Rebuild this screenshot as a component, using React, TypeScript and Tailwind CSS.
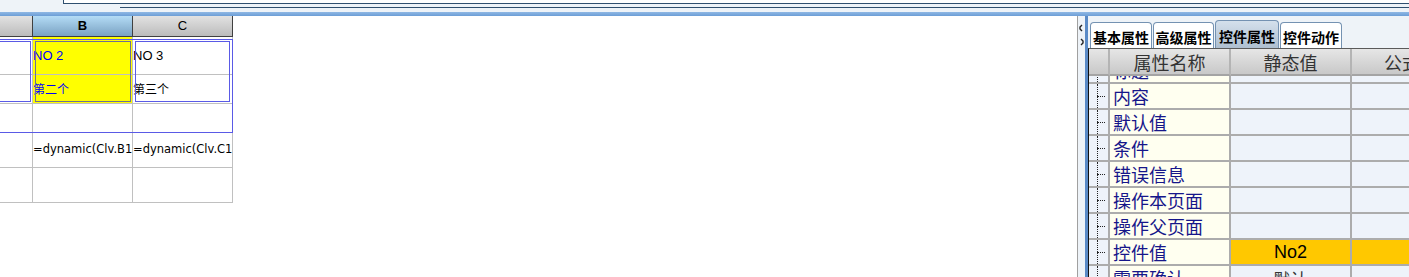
import React from 'react'

const CJK = "font-['Noto_Sans_CJK_SC','Noto_Sans',sans-serif]"

const PROPS = ['标题', '内容', '默认值', '条件', '错误信息', '操作本页面', '操作父页面', '控件值', '需要确认']

function TopBar() {
  return (
    <div className="h-[16px] flex flex-col">
      <div className="h-[12px] flex flex-col">
        <div className="ml-[63px] h-[4px] bg-white border-l border-b border-[#2f4f6f]" />
        <div className="ml-[120px] mt-[3px] h-px bg-[#2f4f6f]" />
      </div>
      <div className="h-[4px] bg-gradient-to-b from-[#8fb8e4] to-[#6c9ed6]" />
    </div>
  )
}

function Sheet() {
  const cell = 'border-r border-b border-[#c0c0c0] flex items-center whitespace-nowrap leading-none'
  const formula = "font-['DejaVu_Sans',Tahoma,sans-serif] text-[11.5px] text-black"
  return (
    <div className="relative w-[1078px] bg-white border-r border-[#a0a0a0] font-['Liberation_Sans',Arial,sans-serif] text-[12px]">
      <div className="grid grid-cols-[33px_100px_100px] grid-rows-[21px_38px_29px_29px_35px_35px]">
        <div className="border-r border-b border-[#404040] bg-gradient-to-b from-[#e2e2e2] to-[#bcbcbc]" />
        <div className="border-r border-b border-[#404040] bg-gradient-to-b from-[#b4dcf6] to-[#7aa2c2] flex items-center justify-center font-bold text-[13px] text-black">
          B
        </div>
        <div className="border-r border-b border-[#404040] bg-gradient-to-b from-[#e2e2e2] to-[#bcbcbc] flex items-center justify-center text-[13px] text-black">
          C
        </div>

        <div className={cell} />
        <div className={`${cell} bg-[#ffff00] text-[#0000ff] text-[13px]`}>NO 2</div>
        <div className={`${cell} text-[13px] text-black`}>NO 3</div>

        <div className={cell} />
        <div className={`${cell} bg-[#ffff00] text-[#0000ff] ${CJK} text-[12px]`}>第二个</div>
        <div className={`${cell} ${CJK} text-[12px] text-black`}>第三个</div>

        <div className={cell} />
        <div className={cell} />
        <div className={cell} />

        <div className={cell} />
        <div className={`${cell} ${formula}`}>=dynamic(Clv.B1</div>
        <div className={`${cell} ${formula}`}>=dynamic(Clv.C1</div>

        <div className={cell} />
        <div className={cell} />
        <div className={cell} />
      </div>

      {/* selection outlines */}
      <div className="absolute left-[-1px] top-[23px] w-[234px] h-[94px] border border-[#5a5ae6]" />
      <div className="absolute left-[-1px] top-[25px] w-[32px] h-[61px] border border-[#5a5ae6]" />
      <div className="absolute left-[35px] top-[25px] w-[96px] h-[61px] border border-[#6e6e96]" />
      <div className="absolute left-[135px] top-[25px] w-[95px] h-[61px] border border-[#5a5ae6]" />
    </div>
  )
}

function Splitter() {
  return (
    <div className="w-[7px] bg-[#eef3f8] flex justify-center pt-[8px]">
      <svg width="5" height="22" viewBox="0 0 5 22">
        <path d="M3 1 L1 3 L1 5 L3 7" stroke="#222" strokeWidth="1.4" fill="none" />
        <path d="M2 15 L4 17 L4 19 L2 21" stroke="#222" strokeWidth="1.4" fill="none" />
      </svg>
    </div>
  )
}

function Tabs() {
  const tabs = [
    { label: '基本属性', w: 'w-[62px]' },
    { label: '高级属性', w: 'w-[61px]' },
    { label: '控件属性', w: 'w-[64px]', active: true },
    { label: '控件动作', w: 'w-[62px]' },
  ]
  return (
    <div className="h-[32px] flex items-end pl-[2px] gap-px bg-[#eef3f8]">
      {tabs.map((t) => (
        <div
          key={t.label}
          className={`${t.w} ${t.active ? 'h-[28px] bg-gradient-to-b from-[#d4e0ec] to-[#aebfd0]' : 'h-[26px] bg-white'} border border-b-0 border-[#7492b2] rounded-t-[4px] flex items-center justify-center pt-[2px] ${CJK} font-bold text-[14px] leading-none text-black`}
        >
          {t.label}
        </div>
      ))}
    </div>
  )
}

function PropTable() {
  const head = `h-[27px] border-r-2 border-b-2 border-r-[#b4b4b4] border-b-[#a4a4a4] flex items-center justify-center ${CJK} text-[18px] leading-none text-[#333]`
  const line = 'border-r-2 border-b-2 border-[#acacac]'
  return (
    <div className="flex-1 flex flex-col border-l border-[#101010] border-t border-t-[#5a5a5a] overflow-hidden">
      <div className="grid grid-cols-[21px_121px_121px_1fr] bg-gradient-to-b from-[#e6e6e6] to-[#c6c6c6]">
        <div className={head} />
        <div className={head}>属性名称</div>
        <div className={head}>静态值</div>
        <div className={`${head} border-r-0 justify-start pl-[32px] whitespace-nowrap`}>公式值</div>
      </div>
      <div className="flex-1 overflow-hidden">
        <div className="-mt-[18px]">
          {PROPS.map((p) => {
            const hot = p === '控件值'
            return (
              <div key={p} className="grid grid-cols-[21px_121px_121px_1fr] grid-rows-[26px] h-[26px] leading-none">
                <div className={`relative bg-[#eef3fa] ${line}`}>
                  <div className="absolute left-[8px] top-0 bottom-0 border-l border-dotted border-[#222]" />
                  <div className="absolute left-[8px] top-[12px] w-[8px] border-t border-dotted border-[#222]" />
                </div>
                <div className={`bg-[#fffff0] ${line} pl-[3px] flex items-center ${CJK} text-[18px] text-[#16168a] whitespace-nowrap`}>
                  {p}
                </div>
                <div
                  className={`${hot ? 'bg-[#ffc800] text-black' : 'bg-[#eef3fa] text-[#333]'} ${line} flex items-center justify-center font-['Liberation_Sans',Arial,sans-serif] text-[18px]`}
                >
                  {hot ? 'No2' : p === '需要确认' ? <span className={`${CJK} text-[17px]`}>默认</span> : ''}
                </div>
                <div className={`${hot ? 'bg-[#ffc800]' : 'bg-[#eef3fa]'} border-b-2 border-[#acacac]`} />
              </div>
            )
          })}
        </div>
      </div>
    </div>
  )
}

export default function App() {
  return (
    <div className="w-[1409px] h-[277px] overflow-hidden bg-[#eef3f8] flex flex-col">
      <TopBar />
      <div className="flex-1 flex min-h-0">
        <Sheet />
        <Splitter />
        <div className="w-[3px] bg-[#5a8ac6]" />
        <div className="flex-1 flex flex-col min-w-0">
          <Tabs />
          <PropTable />
        </div>
      </div>
    </div>
  )
}
